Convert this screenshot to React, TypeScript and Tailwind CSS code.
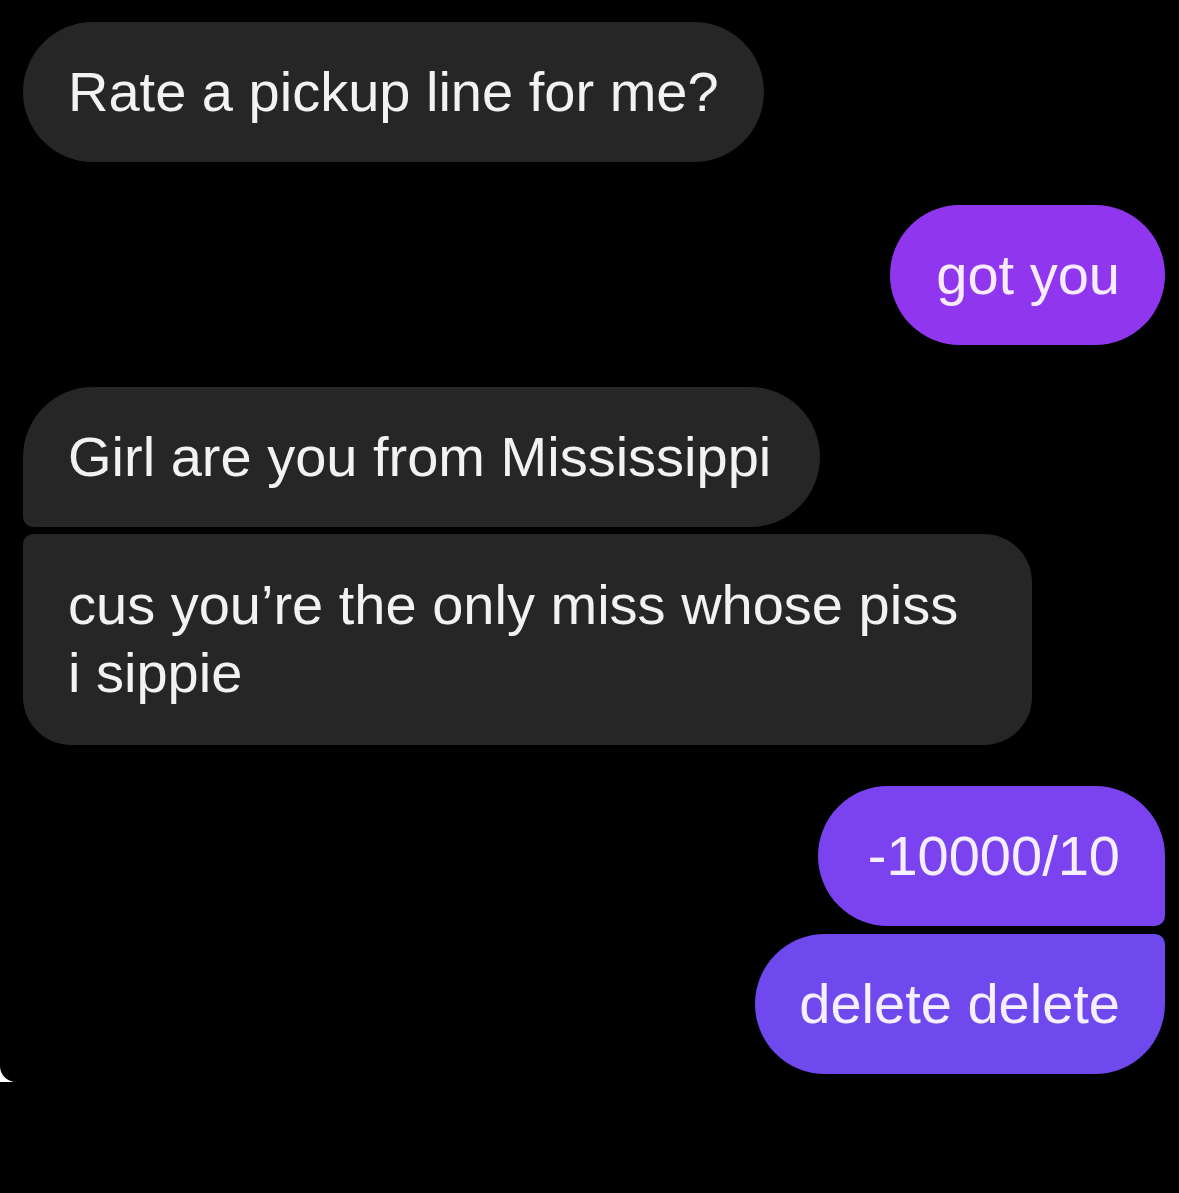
type Side = 'in' | 'out';

interface Msg {
  id: number;
  side: Side;
  lines: string[];
  shape: string;
  color: string;
  gap: string;
  pad: string;
  width?: string;
}

const messages: Msg[] = [
  {
    id: 1,
    side: 'in',
    lines: ['Rate a pickup line for me?'],
    shape: 'rounded-[70px]',
    color: 'bg-[#262626] text-[#f2f2f2]',
    gap: 'mt-0',
    pad: 'px-[45px] py-[36px]',
  },
  {
    id: 2,
    side: 'out',
    lines: ['got you'],
    shape: 'rounded-[70px]',
    color: 'bg-[#9136ef] text-[#f7ecff]',
    gap: 'mt-[43px]',
    pad: 'pl-[46px] pr-[45px] py-[36px]',
  },
  {
    id: 3,
    side: 'in',
    lines: ['Girl are you from Mississippi'],
    shape: 'rounded-tl-[70px] rounded-r-[70px] rounded-bl-[10px]',
    color: 'bg-[#262626] text-[#f2f2f2]',
    gap: 'mt-[42px]',
    pad: 'pl-[45px] pr-[49px] py-[36px]',
  },
  {
    id: 4,
    side: 'in',
    lines: ['cus you’re the only miss whose piss', 'i sippie'],
    shape: 'rounded-tl-[10px] rounded-tr-[48px] rounded-b-[48px]',
    color: 'bg-[#262626] text-[#f2f2f2]',
    gap: 'mt-[7px]',
    pad: 'px-[45px] pt-[37px] pb-[38px]',
    width: 'w-[1009px]',
  },
  {
    id: 5,
    side: 'out',
    lines: ['-10000/10'],
    shape: 'rounded-l-[70px] rounded-tr-[70px] rounded-br-[10px]',
    color: 'bg-[#7b43ef] text-[#f5eeff]',
    gap: 'mt-[41px]',
    pad: 'pl-[50px] pr-[45px] py-[36px]',
  },
  {
    id: 6,
    side: 'out',
    lines: ['delete delete'],
    shape: 'rounded-l-[70px] rounded-br-[70px] rounded-tr-[10px]',
    color: 'bg-[#6f48ee] text-[#f5f0ff]',
    gap: 'mt-[8px]',
    pad: 'pl-[44px] pr-[45px] py-[36px]',
  },
];

function Bubble({ msg }: { msg: Msg }) {
  return (
    <div
      className={`${msg.gap} ${msg.side === 'in' ? 'self-start' : 'self-end'} ${msg.shape} ${msg.color} ${msg.width ?? ''} ${msg.pad} text-[56px] leading-[68px]`}
    >
      {msg.lines.map((line, i) => (
        <span key={i}>
          {i > 0 && <br />}
          {line}
        </span>
      ))}
    </div>
  );
}

export default function App() {
  return (
    <div
      className="w-[1179px] h-[1193px] bg-black overflow-hidden"
      style={{ fontFamily: '"Liberation Sans", Arial, sans-serif' }}
    >
      {/* screenshot area, white peeks out at its rounded corner */}
      <div className="h-[1082px] bg-white">
        <div className="h-full bg-black rounded-bl-[16px] flex flex-col pt-[22px] pl-[23px] pr-[14px]">
          {messages.map((m) => (
            <Bubble key={m.id} msg={m} />
          ))}
        </div>
      </div>
    </div>
  );
}
